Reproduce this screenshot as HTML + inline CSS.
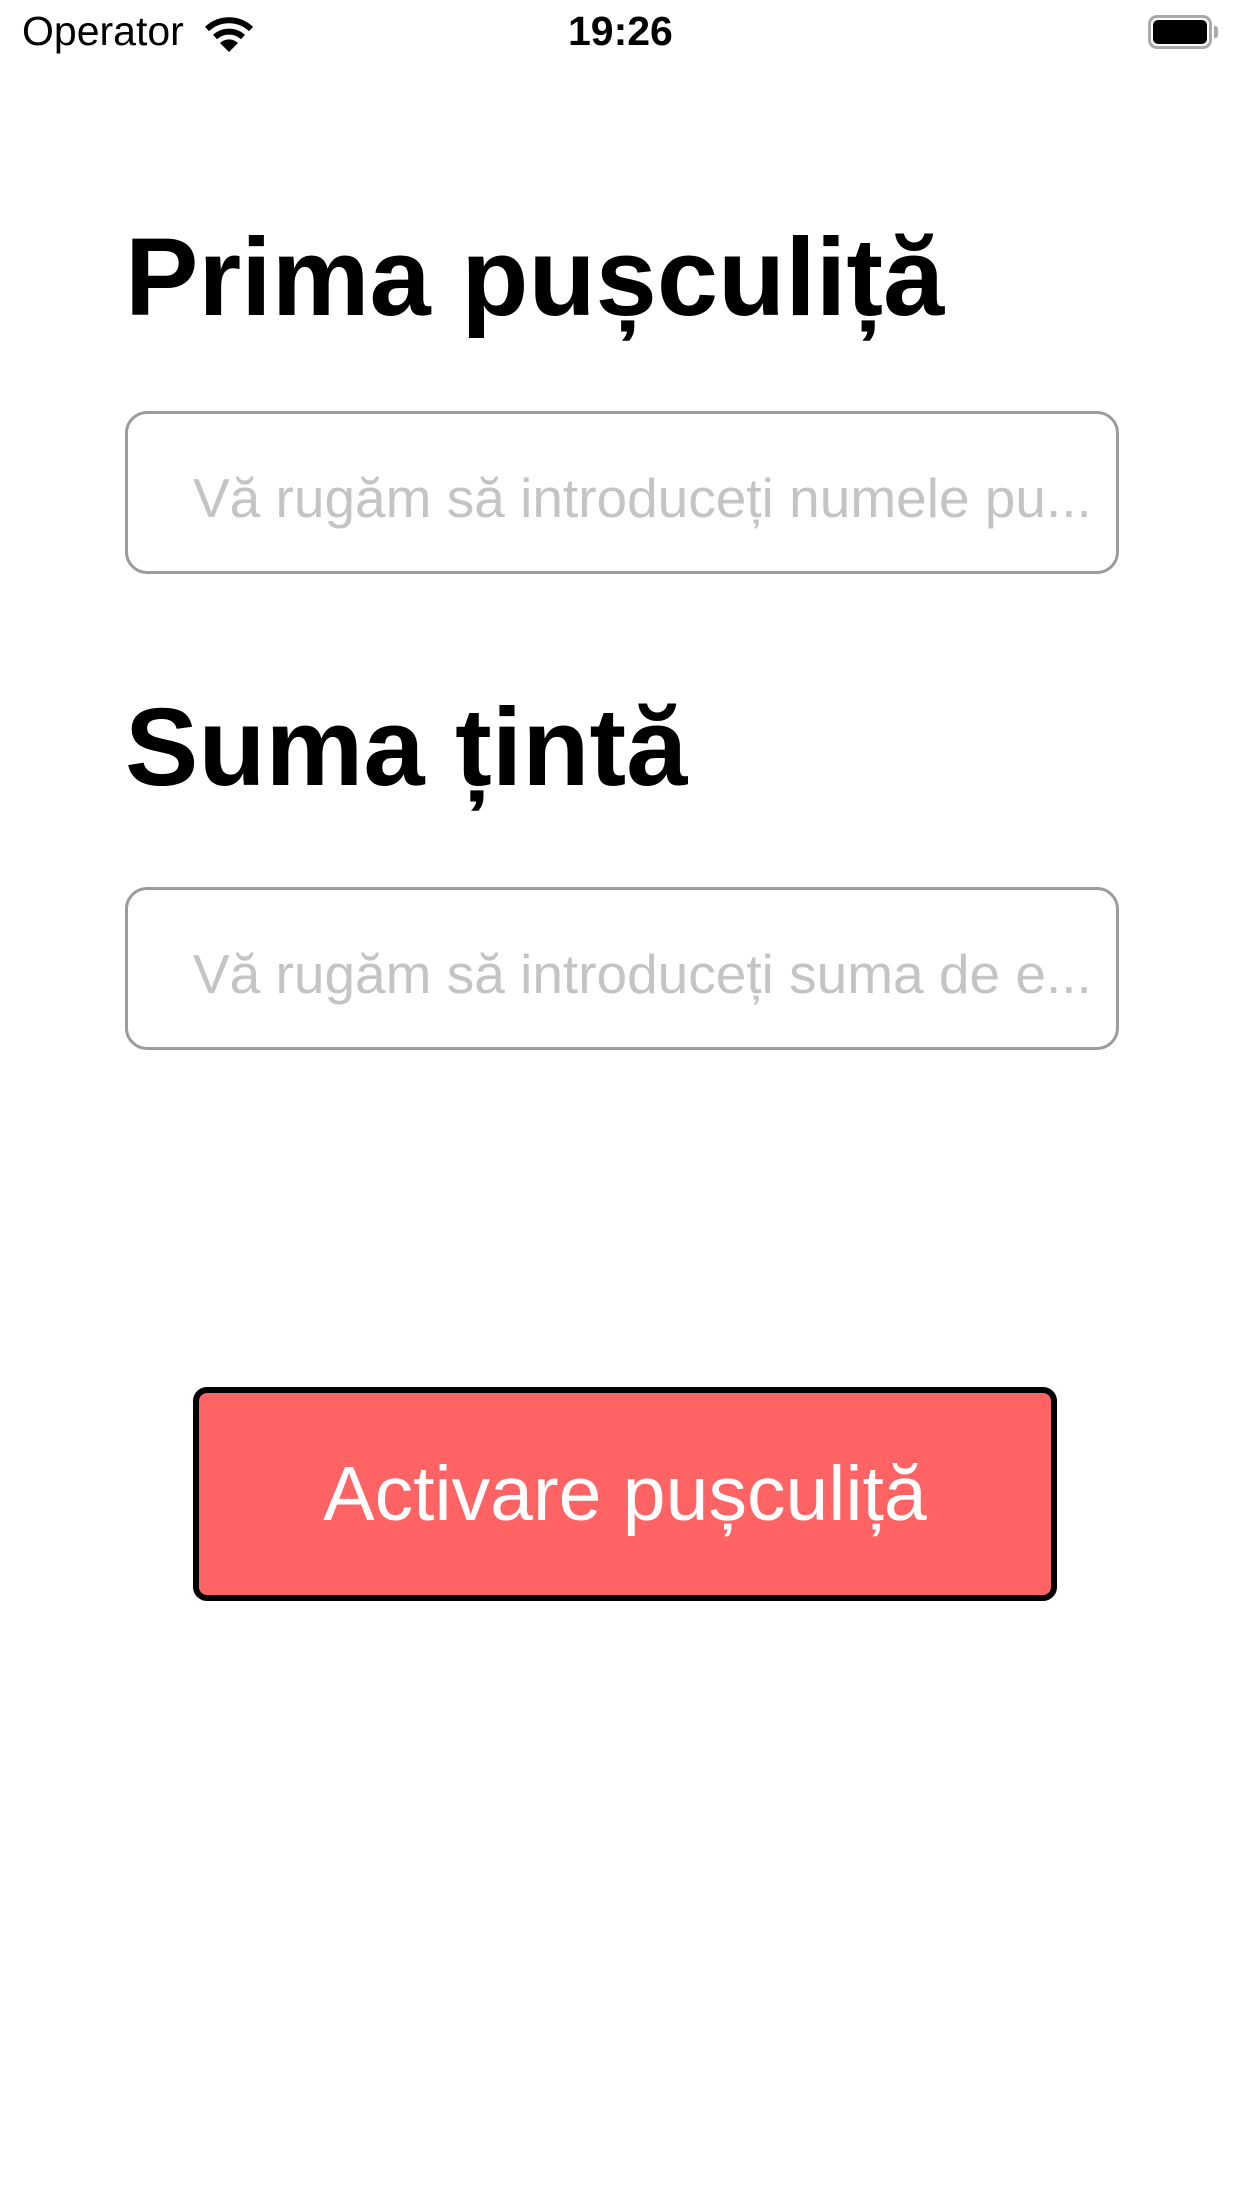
<!DOCTYPE html>
<html><head><meta charset="utf-8"><style>
body{margin:0;width:1242px;height:2208px;background:#fff;position:relative;font-family:"Liberation Sans",sans-serif;overflow:hidden}
.a{position:absolute;white-space:nowrap}
.h{font-weight:bold;font-size:110px;left:125px;color:#000;letter-spacing:0px}
.inp{position:absolute;left:125px;width:994px;height:163px;border:3px solid #9c9c9c;border-radius:22px;box-sizing:border-box}
.ph{position:absolute;left:193px;font-size:55px;color:#c4c4c6}
</style></head><body>
<div class="a" style="left:22px;top:8px;font-size:41px">Operator</div>
<svg class="a" style="left:204px;top:16px" width="50" height="38" viewBox="0 0 50 38"><path d="M3 13 A32 32 0 0 1 47 13" stroke="#000" stroke-width="6" fill="none"/><path d="M11 21 A21 21 0 0 1 39 21" stroke="#000" stroke-width="6" fill="none"/><path d="M25 36 L16 27 A13 13 0 0 1 34 27 Z" fill="#000"/></svg>
<div class="a" style="left:568px;top:8px;font-size:41px;font-weight:bold">19:26</div>
<div class="a" style="left:1148px;top:15px;width:64px;height:34px;border:3px solid #aaa;border-radius:9px;box-sizing:border-box"></div>
<div class="a" style="left:1153px;top:20px;width:54px;height:24px;background:#000;border-radius:5px"></div>
<div class="a" style="left:1214px;top:26px;width:4px;height:12px;background:#aaa;border-radius:0 3px 3px 0"></div>
<div class="a h" style="top:214px">Prima pușculiță</div>
<div class="inp" style="top:411px"></div>
<div class="ph" style="top:466px">Vă rugăm să introduceți numele pu...</div>
<div class="a h" style="top:684px">Suma țintă</div>
<div class="inp" style="top:887px"></div>
<div class="ph" style="top:942px">Vă rugăm să introduceți suma de e...</div>
<div class="a" style="left:193px;top:1387px;width:864px;height:214px;background:#ff6363;border:6px solid #000;border-radius:14px;box-sizing:border-box"></div>
<div class="a" style="left:193px;top:1450px;width:864px;text-align:center;font-size:77px;color:#fff">Activare pușculiță</div>
</body></html>
